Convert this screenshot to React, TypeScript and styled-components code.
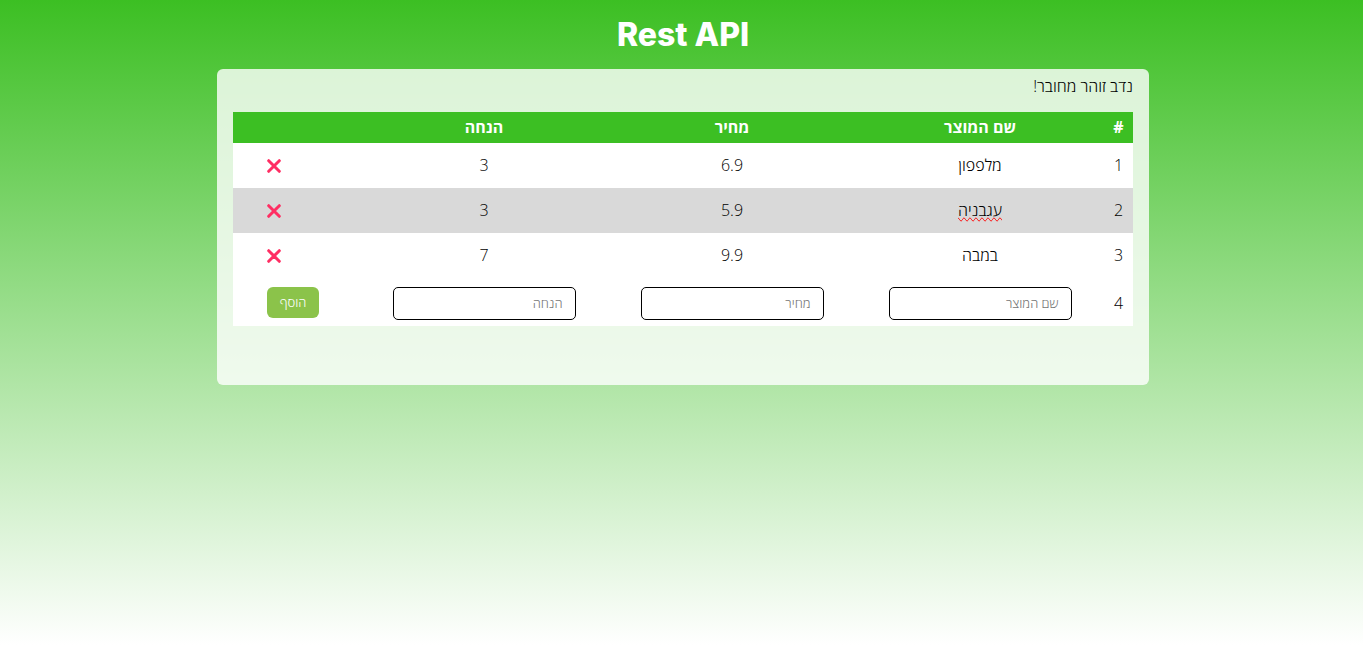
import React, { useState } from "react";
import styled, { createGlobalStyle } from "styled-components";

const GlobalStyle = createGlobalStyle`
  * {
    box-sizing: border-box;
  }
  html {
    min-height: 100%;
    background: linear-gradient(to bottom, #3cbf23, #ffffff) no-repeat;
  }
  body {
    margin: 0;
    font-family: "Open Sans", sans-serif;
    font-size: 16px;
    font-weight: 300;
    line-height: 19px;
    color: #000;
  }
`;

const Page = styled.div`
  display: flex;
  flex-direction: column;
  align-items: center;
  padding: 14px 13px 24px 16px;
`;

const Title = styled.h1`
  margin: 0 0 13px;
  font-family: "Inter", sans-serif;
  font-size: 32px;
  line-height: 42px;
  font-weight: 800;
  color: #fff;
`;

const Panel = styled.main`
  width: 100%;
  max-width: 932px;
  min-height: 316px;
  padding: 8px 16px 16px;
  border-radius: 6px;
  background: rgba(255, 255, 255, 0.8);
`;

const Status = styled.p`
  margin: 0 0 16px;
`;

const Table = styled.table`
  width: 100%;
  table-layout: fixed;
  border-collapse: collapse;
  background: #fff;
`;

const Column = styled.col<{ $width?: number }>`
  width: ${({ $width }) => ($width ? `${$width}px` : "auto")};
`;

const HeadCell = styled.th`
  padding: 6px 0;
  background: #3cbf23;
  color: #fff;
  font-weight: 700;
  text-align: center;
`;

const Row = styled.tr`
  height: 45px;
  &:nth-child(even):not(:last-child) {
    background: #d9d9d9;
  }
`;

const Cell = styled.td`
  padding: 0;
  text-align: center;
`;

const ActionCell = styled(Cell)`
  padding-left: 34px;
  text-align: left;
`;

const FormRow = styled.tr`
  & > td {
    padding-top: 9px;
    padding-bottom: 6px;
    vertical-align: middle;
  }
  & > td:last-child {
    vertical-align: top;
  }
`;

const Misspelled = styled.span`
  text-decoration-line: spelling-error;
`;

const TextInput = styled.input`
  display: block;
  width: 183px;
  max-width: 100%;
  height: 33px;
  margin: 0 auto;
  padding: 0 12px 2px;
  border: 1px solid #000;
  border-radius: 5px;
  background: #fff;
  font-family: inherit;
  font-size: 13px;
  font-weight: 300;
  &::placeholder {
    color: #757575;
  }
`;

const AddButton = styled.button`
  display: inline-block;
  width: 52px;
  height: 31px;
  padding: 0 0 2px;
  border: 0;
  border-radius: 6px;
  background: #8bc34a;
  color: #fff;
  font-family: inherit;
  font-size: 13px;
  font-weight: 300;
  vertical-align: top;
  cursor: pointer;
`;

const DeleteButton = styled.button`
  display: flex;
  padding: 0;
  border: 0;
  background: none;
  color: #ff2e63;
  cursor: pointer;
`;

const DeleteCell = styled(ActionCell)`
  direction: ltr;
`;

const CrossIcon = () => (
  <svg width="14" height="14" viewBox="0 0 14 14" fill="none" stroke="currentColor" strokeWidth="3" strokeLinecap="round" aria-hidden="true">
    <path d="M1.7 1.7 12.3 12.3M12.3 1.7 1.7 12.3" />
  </svg>
);

interface Product {
  id: number;
  name: string;
  price: number;
  discount: number;
  misspelled?: boolean;
}

const initialProducts: Product[] = [
  { id: 1, name: "מלפפון", price: 6.9, discount: 3 },
  { id: 2, name: "עגבניה", price: 5.9, discount: 3, misspelled: true },
  { id: 3, name: "במבה", price: 9.9, discount: 7 },
];

const fields = [
  { key: "name", label: "שם המוצר" },
  { key: "price", label: "מחיר" },
  { key: "discount", label: "הנחה" },
] as const;

const emptyDraft = { name: "", price: "", discount: "" };

export default function App() {
  const [products, setProducts] = useState(initialProducts);
  const [draft, setDraft] = useState(emptyDraft);

  const addProduct = () => {
    if (!draft.name) return;
    setProducts([
      ...products,
      { id: Date.now(), name: draft.name, price: Number(draft.price), discount: Number(draft.discount) },
    ]);
    setDraft(emptyDraft);
  };

  return (
    <Page dir="rtl" lang="he">
      <GlobalStyle />
      <Title>Rest API</Title>
      <Panel>
        <Status>נדב זוהר מחובר!</Status>
        <Table>
          <colgroup>
            <Column $width={29} />
            <Column />
            <Column />
            <Column />
            <Column $width={127} />
          </colgroup>
          <thead>
            <tr>
              <HeadCell scope="col">#</HeadCell>
              {fields.map(({ key, label }) => (
                <HeadCell key={key} scope="col">{label}</HeadCell>
              ))}
              <HeadCell />
            </tr>
          </thead>
          <tbody>
            {products.map((product, index) => (
              <Row key={product.id}>
                <Cell>{index + 1}</Cell>
                <Cell>{product.misspelled ? <Misspelled>{product.name}</Misspelled> : product.name}</Cell>
                <Cell>{product.price}</Cell>
                <Cell>{product.discount}</Cell>
                <DeleteCell>
                  <DeleteButton
                    type="button"
                    aria-label="מחק"
                    onClick={() => setProducts(products.filter((item) => item.id !== product.id))}
                  >
                    <CrossIcon />
                  </DeleteButton>
                </DeleteCell>
              </Row>
            ))}
            <FormRow>
              <Cell>{products.length + 1}</Cell>
              {fields.map(({ key, label }) => (
                <Cell key={key}>
                  <TextInput
                    type="text"
                    aria-label={label}
                    placeholder={label}
                    value={draft[key]}
                    onChange={(event) => setDraft({ ...draft, [key]: event.target.value })}
                  />
                </Cell>
              ))}
              <ActionCell>
                <AddButton type="button" onClick={addProduct}>הוסף</AddButton>
              </ActionCell>
            </FormRow>
          </tbody>
        </Table>
      </Panel>
    </Page>
  );
}
